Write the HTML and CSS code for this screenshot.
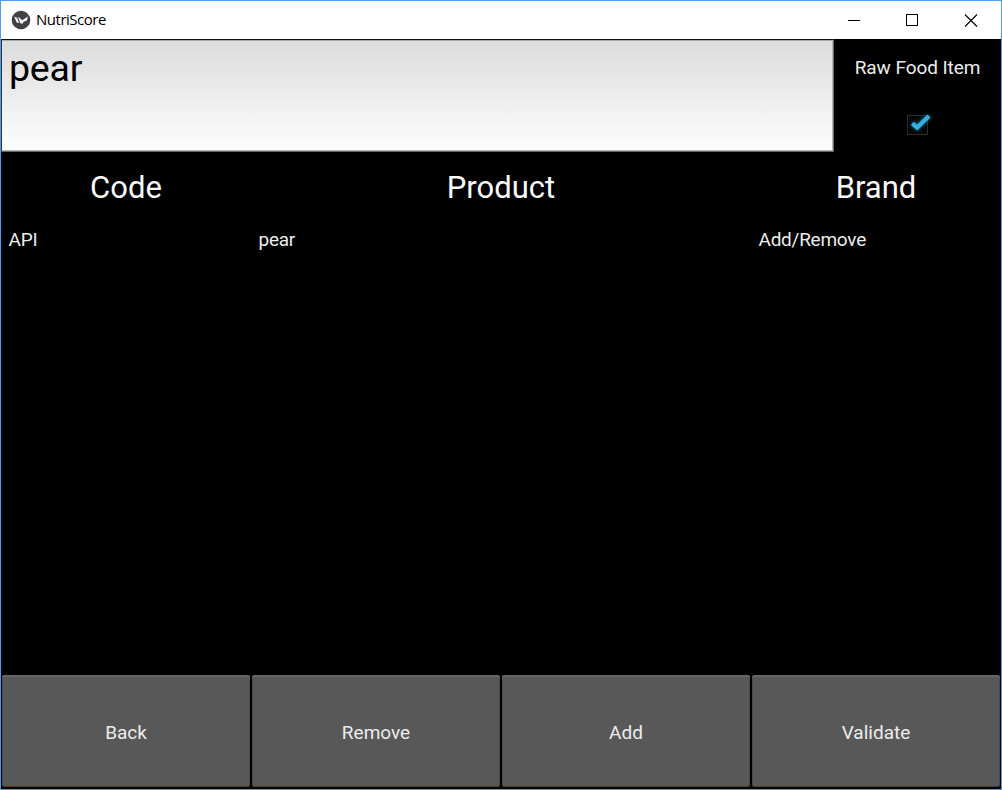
FILE: index.html
```html
<!DOCTYPE html>
<html lang="en">
<head>
<meta charset="utf-8">
<title>NutriScore</title>
<link rel="stylesheet" href="styles.css">
</head>
<body>
<div class="window">
  <header class="titlebar">
    <svg class="app-icon" width="20" height="20" viewBox="0 0 20 20">
      <circle cx="10" cy="10" r="9.3" fill="#3f4144"/>
      <path d="M3.2 6.8L6 7.8L8.2 12.9L5.8 12.6Z" fill="#fff"/>
      <path d="M7 6.6L11.2 10.2L17 6.6L15.7 10.8L12.8 11.6L11.4 13.8L9.4 13.2Z" fill="#fff"/>
    </svg>
    <span class="title">NutriScore</span>
    <svg class="controls" width="130" height="14" viewBox="0 0 130 14" fill="none" stroke="#000" shape-rendering="crispEdges">
      <path d="M0 7.5H12"/>
      <rect x="58.5" y="1.5" width="11" height="11"/>
      <path d="M117 1.5L129 13.5M129 1.5L117 13.5" stroke-width="1.1" shape-rendering="auto"/>
    </svg>
  </header>
  <main class="app">
    <section class="search">
      <div class="field">pear</div>
      <div class="option">
        <div class="option-label">Raw Food Item</div>
        <div class="option-check">
          <svg class="check" width="41" height="40" viewBox="0 0 41 40">
            <rect x="10.5" y="10.5" width="20" height="19" fill="#050505" stroke="#2c2c2c"/>
            <path class="tick" d="M15.3 18.4L20.2 22.6L32 11" fill="none" stroke="#33b0e0" stroke-width="4.2"/>
          </svg>
        </div>
      </div>
    </section>
    <section class="row head">
      <div>Code</div><div>Product</div><div>Brand</div>
    </section>
    <section class="row item">
      <div>API</div><div>pear</div><div>Add/Remove</div>
    </section>
    <footer class="actions">
      <button>Back</button><button>Remove</button><button>Add</button><button>Validate</button>
    </footer>
  </main>
</div>
</body>
</html>
```
FILE: styles.css
```css
* { box-sizing: border-box; }
body { margin: 0; background: #000; }
.window {
  width: 1002px; height: 790px;
  border: 1px solid #4b9cec;
  display: flex; flex-direction: column;
  font-family: Roboto, sans-serif;
}
.titlebar {
  height: 38px; background: #fff;
  display: flex; align-items: center;
  padding: 0 23px 0 10px;
}
.app-icon { margin-top: -1px; }
.title {
  margin: -2px 0 0 5px; flex: 1;
  font: 15px "Open Sans", sans-serif;
  letter-spacing: -0.48px; color: #000;
}
.app {
  flex: 1; background: #000; color: #ececec;
  display: flex; flex-direction: column;
  font-size: 19px;
}
.search { display: flex; height: 113px; }
.field {
  width: 833px;
  border: 1px solid #666;
  border-top-color: #111;
  border-left-color: #333;
  background: linear-gradient(#dcdcdc, #fdfdfd);
  box-shadow: inset 0 1px 0 #a8a8a8, inset -1px -1px 0 #b8b8b8;
  color: #000; font-size: 37.5px; line-height: 43px; letter-spacing: -0.2px;
  padding: 7px 7px;
}
.option { flex: 1; display: flex; flex-direction: column; text-align: center; }
.option-label { height: 56px; line-height: 57px; letter-spacing: -0.08px; }
.option-check { flex: 1; display: flex; justify-content: center; padding-top: 10px; }
.tick { filter: drop-shadow(0 0 2px #0b6f96); }
.row { display: grid; grid-template-columns: 250px 500px 250px; }
.head { height: 70px; line-height: 72px; font-size: 31px; text-align: center; color: #fafafa; }
.item { line-height: 36px; padding-left: 7.5px; letter-spacing: -0.25px; }
.actions { display: grid; grid-template-columns: repeat(4, 250px); height: 115px; margin-top: auto; }
.actions button {
  margin: 1px 1px 2px; padding: 2px 0 0 0;
  border: 0; border-radius: 3px;
  background: #585858;
  box-shadow: inset 0 2px 0 #686668, inset 0 -1px 0 #424242, inset 1px 0 0 #4c4c4c, inset -1px 0 0 #4c4c4c;
  color: #ececec; font: 19px Roboto, sans-serif;
}
```
